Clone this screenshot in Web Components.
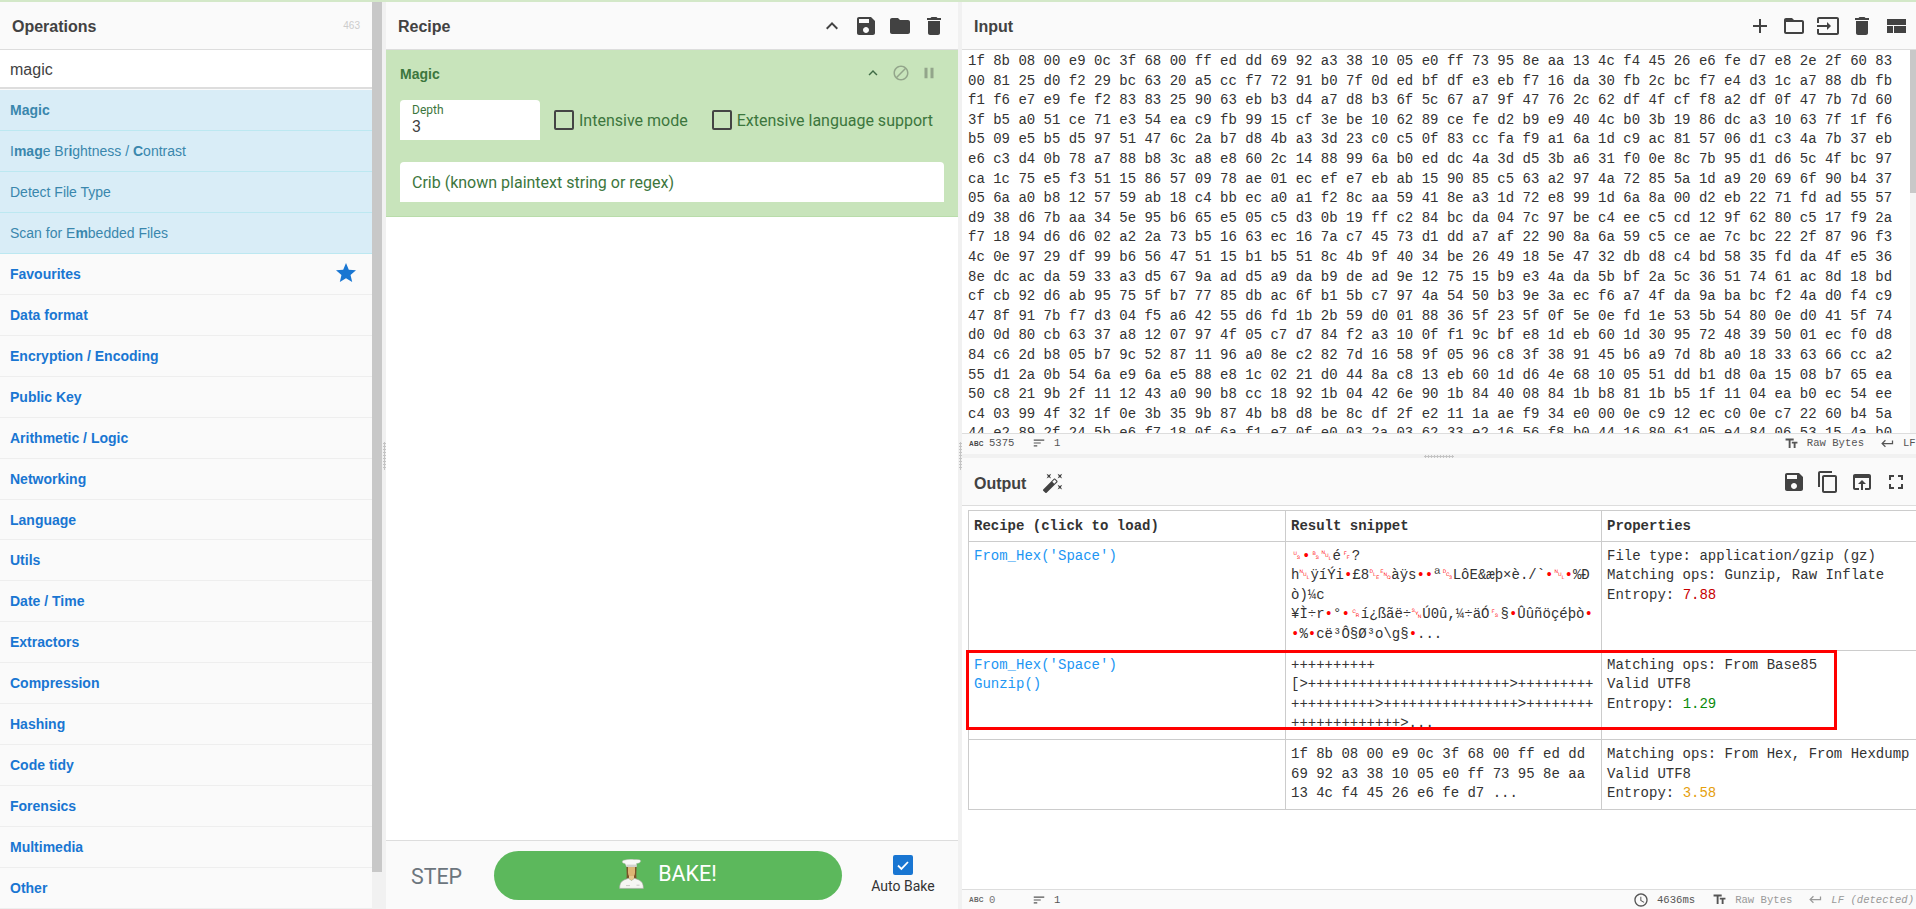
<!DOCTYPE html>
<html lang="en">
<head>
<meta charset="utf-8">
<title>CyberChef</title>
<style>
  html, body { margin: 0; padding: 0; height: 100%; overflow: hidden; background: #f1f1f1; }
  body { font-family: "Liberation Sans", Arial, sans-serif; color: #424242; }
</style>
</head>
<body>
<cc-app></cc-app>

<script>
const ICONS = {
  up: 'M7.41 15.41L12 10.83l4.59 4.58L18 14l-6-6-6 6z',
  save: 'M17 3H5c-1.11 0-2 .9-2 2v14c0 1.1.89 2 2 2h14c1.1 0 2-.9 2-2V7l-4-4zm-5 16c-1.66 0-3-1.34-3-3s1.34-3 3-3 3 1.34 3 3-1.34 3-3 3zm3-10H5V5h10v4z',
  folder: 'M10 4H4c-1.1 0-1.99.9-1.99 2L2 18c0 1.1.9 2 2 2h16c1.1 0 2-.9 2-2V8c0-1.1-.9-2-2-2h-8l-2-2z',
  folderOpen: 'M20 6h-8l-2-2H4c-1.1 0-1.99.9-1.99 2L2 18c0 1.1.9 2 2 2h16c1.1 0 2-.9 2-2V8c0-1.1-.9-2-2-2zm0 12H4V8h16v10z',
  trash: 'M6 19c0 1.1.9 2 2 2h8c1.1 0 2-.9 2-2V7H6v12zM19 4h-3.5l-1-1h-5l-1 1H5v2h14V4z',
  add: 'M19 13h-6v6h-2v-6H5v-2h6V5h2v6h6v2z',
  input: 'M21 3.01H3c-1.1 0-2 .9-2 2V9h2V4.99h18v14.03H3V15H1v4.01c0 1.1.9 1.98 2 1.98h18c1.1 0 2-.88 2-1.98v-14c0-1.11-.9-2-2-2zM11 16l4-4-4-4v3H1v2h10v3z',
  layout: 'M3 19h6v-7H3v7zm7 0h12v-7H10v7zM3 5v6h19V5H3z',
  block: 'M12 2C6.48 2 2 6.48 2 12s4.48 10 10 10 10-4.48 10-10S17.52 2 12 2zM4 12c0-4.42 3.58-8 8-8 1.85 0 3.55.63 4.9 1.69L5.69 16.9C4.63 15.55 4 13.85 4 12zm8 8c-1.85 0-3.55-.63-4.9-1.69L18.31 7.1C19.37 8.45 20 10.15 20 12c0 4.42-3.58 8-8 8z',
  pause: 'M6 19h4V5H6v14zm8-14v14h4V5h-4z',
  copy: 'M16 1H4c-1.1 0-2 .9-2 2v14h2V3h12V1zm3 4H8c-1.1 0-2 .9-2 2v14c0 1.1.9 2 2 2h11c1.1 0 2-.9 2-2V7c0-1.1-.9-2-2-2zm0 16H8V7h11v14z',
  openIn: 'M19 4H5c-1.11 0-2 .9-2 2v12c0 1.1.89 2 2 2h4v-2H5V8h14v10h-4v2h4c1.1 0 2-.9 2-2V6c0-1.1-.89-2-2-2zm-7 6l-4 4h3v6h2v-6h3l-4-4z',
  fullscreen: 'M7 14H5v5h5v-2H7v-3zm-2-4h2V7h3V5H5v5zm12 7h-3v2h5v-5h-2v3zM14 5v2h3v3h2V5h-5z',
  wand: 'M7.5 5.6L10 7 8.6 4.5 10 2 7.5 3.4 5 2l1.4 2.5L5 7zm12 9.8L17 14l1.4 2.5L17 19l2.5-1.4L22 19l-1.4-2.5L22 14zM22 2l-2.5 1.4L17 2l1.4 2.5L17 7l2.5-1.4L22 7l-1.4-2.5zm-7.63 5.29c-.39-.39-1.02-.39-1.41 0L1.29 18.96c-.39.39-.39 1.02 0 1.41l2.34 2.34c.39.39 1.02.39 1.41 0L16.7 11.05c.39-.39.39-1.02 0-1.41l-2.33-2.35zm-1.03 5.49l-2.12-2.12 2.44-2.44 2.12 2.12-2.44 2.44z',
  star: 'M12 17.27L18.18 21l-1.64-7.03L22 9.24l-7.19-.61L12 2 9.19 8.63 2 9.24l5.46 4.73L5.82 21z',
  clock: 'M11.99 2C6.47 2 2 6.48 2 12s4.47 10 9.99 10C17.52 22 22 17.52 22 12S17.52 2 11.99 2zM12 20c-4.42 0-8-3.58-8-8s3.58-8 8-8 8 3.58 8 8-3.58 8-8 8zm.5-13H11v6l5.25 3.15.75-1.23-4.5-2.67z',
  text: 'M2.5 4v3h5v12h3V7h5V4h-13zm19 5h-9v3h3v7h3v-7h3V9z',
  enter: 'M19 7v4H5.83l3.58-3.59L8 6l-6 6 6 6 1.41-1.41L5.83 13H21V7z',
  sort: 'M3 18h6v-2H3v2zM3 6v2h18V6H3zm0 7h12v-2H3v2z'
};

class CcIcon extends HTMLElement {
  connectedCallback() {
    const size = this.getAttribute('size') || 24;
    const shadow = this.attachShadow({ mode: 'open' });
    shadow.innerHTML = `
      <style>
        :host { display: inline-flex; flex: none; width: ${size}px; height: ${size}px; }
        svg { display: block; width: 100%; height: 100%; fill: currentColor; }
      </style>
      <svg viewBox="0 0 24 24"><path d="${ICONS[this.getAttribute('name')]}"/></svg>`;
  }
}

// title on the left, icon buttons on the right
class CcPanelHeader extends HTMLElement {
  constructor() {
    super();
    this.attachShadow({ mode: 'open' }).innerHTML = `
      <style>
        :host {
          display: flex; align-items: center; box-sizing: border-box; height: 48px; flex: none;
          background: #fafafa; border-bottom: 1px solid #ddd; padding: 0 3px 0 12px; color: #424242;
        }
        .title { font: bold 16px "Liberation Sans", Arial, sans-serif; flex: 1; display: flex; align-items: center; padding-top: 2px; }
        .btns { display: flex; }
        ::slotted(cc-icon) { margin: 0 5px; }
      </style>
      <div class="title"><slot name="title"></slot></div>
      <div class="btns"><slot></slot></div>`;
  }
}

class CcOpItem extends HTMLElement {
  constructor() {
    super();
    this.attachShadow({ mode: 'open' }).innerHTML = `
      <style>
        :host {
          display: flex; align-items: center; box-sizing: border-box; height: 41.12px; padding: 0 10px;
          font: 14px "Liberation Sans", Arial, sans-serif;
          background: #fafafa; color: #1976d2; border-bottom: 1px solid #eee; font-weight: bold;
        }
        :host([hit]) { background: #d9edf7; color: #3a87ad; border-bottom-color: #bce8f1; font-weight: normal; }
        .label { flex: 1; }
      </style>
      <div class="label"><slot></slot></div>
      <slot name="end"></slot>`;
  }
}

class CcOperations extends HTMLElement {
  constructor() {
    super();
    const cats = ['Data format', 'Encryption / Encoding', 'Public Key', 'Arithmetic / Logic', 'Networking',
      'Language', 'Utils', 'Date / Time', 'Extractors', 'Compression', 'Hashing', 'Code tidy', 'Forensics',
      'Multimedia', 'Other'];
    this.attachShadow({ mode: 'open' }).innerHTML = `
      <style>
        :host { display: flex; height: 100%; overflow: hidden; }
        .col { width: 372px; display: flex; flex-direction: column; background: #fafafa; }
        .count { font-size: 10px; color: #ccc; margin-right: 9px; font-weight: normal; }
        .search {
          box-sizing: border-box; height: 39px; flex: none; padding: 2px 10px 0; display: flex; align-items: center;
          background: #fff; border-bottom: 2px solid #ddd; font: 16px "Liberation Sans", Arial, sans-serif; color: #424242;
        }
        b { font-weight: bold; }
        cc-op-item:first-of-type { margin-top: 1px; }
        .star { color: #1976d2; margin: -2px 4px 0 0; }
        .bar { width: 10px; background: #f1f1f1; }
        .thumb { width: 10px; height: 870px; background: #c8c8c8; }
      </style>
      <div class="col">
        <cc-panel-header><span slot="title" style="flex:1">Operations</span><span class="count">463</span></cc-panel-header>
        <div class="search">magic</div>
        <cc-op-item hit><b>Magic</b></cc-op-item>
        <cc-op-item hit>I<b>mag</b>e Br<b>i</b>ghtness / <b>C</b>ontrast</cc-op-item>
        <cc-op-item hit>Detect File Type</cc-op-item>
        <cc-op-item hit>Scan for E<b>m</b>bedded Files</cc-op-item>
        <cc-op-item>Favourites<cc-icon class="star" slot="end" name="star" size="24"></cc-icon></cc-op-item>
        ${cats.map(c => `<cc-op-item>${c}</cc-op-item>`).join('')}
      </div>
      <div class="bar"><div class="thumb"></div></div>`;
  }
}

class CcCheck extends HTMLElement {
  constructor() {
    super();
    this.attachShadow({ mode: 'open' }).innerHTML = `
      <style>
        :host { display: inline-flex; align-items: center; gap: 5px; font: 16px Roboto, sans-serif; color: #3c763d; }
        .box { box-sizing: border-box; width: 20px; height: 20px; border: 2px solid #444; border-radius: 2px; }
      </style>
      <span class="box"></span><slot></slot>`;
  }
}

class CcRecipe extends HTMLElement {
  constructor() {
    super();
    this.attachShadow({ mode: 'open' }).innerHTML = `
      <style>
        :host { display: flex; flex-direction: column; height: 100%; background: #fff; overflow: hidden; }
        cc-panel-header { padding-right: 7px; }
        .op {
          box-sizing: border-box; height: 167px; flex: none; background: #c8e4bb; border-bottom: 1px solid #b9dcaa;
          padding: 0 14px; color: #3c763d;
        }
        .op-head { display: flex; align-items: center; height: 50px; }
        .op-title { flex: 1; font: bold 14px "Liberation Sans", Arial, sans-serif; margin-top: -2px; }
        .op-btns { display: flex; gap: 10px; margin-top: -4px; margin-right: 6px; color: #3f6b45; }
        .dim { opacity: .35; color: #333; }
        .row { display: flex; align-items: center; }
        .field {
          box-sizing: border-box; background: #fff; border-radius: 4px 4px 0 0; height: 40px; padding: 3px 12px 0;
          font-family: Roboto, sans-serif;
        }
        .depth { width: 140px; margin-right: 14px; }
        .depth small { display: block; font-size: 12px; line-height: 14px; color: #3c763d; }
        .depth span { display: block; font-size: 16px; line-height: 19px; color: #424242; }
        cc-check + cc-check { margin-left: 24px; }
        .crib { margin-top: 22px; font-size: 16px; line-height: 36px; color: #3c763d; }
        .space { flex: 1; }
        .foot {
          box-sizing: border-box; height: 69px; flex: none; background: #fafafa; border-top: 1px solid #ddd;
          display: flex; align-items: center; padding: 0 16px 0 25px;
        }
        .step { font: 21.4px Roboto, sans-serif; color: #6c757d; width: 83px; margin-top: 2px; }
        .bake {
          width: 348px; height: 49px; border-radius: 25px; background: #5cb85c; color: #fff; margin-top: 1px;
          display: flex; align-items: center; justify-content: center; gap: 14px;
          font: 21.4px Roboto, sans-serif; line-height: 45px; box-sizing: border-box;
        }
        .bake svg { display: block; margin-bottom: 3px; }
        .bake span { margin-top: -4px; }
        .auto { margin-left: 29px; display: flex; flex-direction: column; align-items: center; font: 14px Roboto, sans-serif; color: #333; width: 64px; margin-top: -1px; }
        .tick { display: block; width: 20px; height: 20px; border-radius: 2px; background: #1976d2; margin-bottom: 3px; }
      </style>
      <cc-panel-header>
        <span slot="title">Recipe</span>
        <cc-icon name="up"></cc-icon><cc-icon name="save"></cc-icon><cc-icon name="folder"></cc-icon><cc-icon name="trash"></cc-icon>
      </cc-panel-header>
      <div class="op">
        <div class="op-head">
          <div class="op-title">Magic</div>
          <div class="op-btns">
            <cc-icon name="up" size="18"></cc-icon>
            <cc-icon class="dim" name="block" size="18"></cc-icon>
            <cc-icon class="dim" name="pause" size="18"></cc-icon>
          </div>
        </div>
        <div class="row">
          <div class="field depth"><small>Depth</small><span>3</span></div>
          <cc-check>Intensive mode</cc-check>
          <cc-check>Extensive language support</cc-check>
        </div>
        <div class="field crib">Crib (known plaintext string or regex)</div>
      </div>
      <div class="space"></div>
      <div class="foot">
        <div class="step">STEP</div>
        <div class="bake">
          <svg width="25" height="30" viewBox="0 0 25 30">
            <path d="M7.5 8 C7.5 13 8 16 7.5 19.5 L17.5 19.5 C17 16 17.5 13 17.5 8 Z" fill="#7a5228"/>
            <path d="M9 8 L16 8 L16 13.5 C16 16.5 14.6 18 12.5 18 C10.4 18 9 16.5 9 13.5 Z" fill="#dcb574"/>
            <path d="M0.6 29.4 C0.6 25.5 1.6 22.5 5 21 L9.5 19.3 L12.5 21.5 L15.5 19.3 L20 21 C23.4 22.5 24.4 25.5 24.4 29.4 Z" fill="#f6f6f3" stroke="#a3a39e" stroke-width=".6"/>
            <path d="M10 17 L15 17 L15 19.4 L12.5 21.6 L10 19.4 Z" fill="#e8c990"/>
            <path d="M7 26.6 h4 M17.5 26.2 h3" stroke="#b5b5b0" stroke-width=".7" fill="none"/>
            <path d="M6 4.5 C2.5 4.5 2.5 1 6 1 C9 0 13 0 15 .6 C19 0 22.5 .6 21.5 2.6 C21 4 19 4.4 17.5 4.6 L17.5 7.6 L7.5 7.6 Z" fill="#f8f8f6" stroke="#b8b8b3" stroke-width=".5"/>
            <rect x="7.5" y="5.6" width="10" height="2.4" fill="#d2d2ce"/>
          </svg>
          <span>BAKE!</span>
        </div>
        <div class="auto">
          <svg class="tick" viewBox="0 0 20 20"><path d="M5 10.5l3.4 3.4L15 7" fill="none" stroke="#fff" stroke-width="1.8"/></svg>
          Auto Bake
        </div>
      </div>`;
  }
}

// bottom strip of input and output panes
class CcStatus extends HTMLElement {
  constructor() {
    super();
    this.attachShadow({ mode: 'open' }).innerHTML = `
      <style>
        :host {
          display: flex; align-items: center; box-sizing: border-box; flex: none; overflow: hidden;
          background: #fafafa; font: 10.6px "Liberation Mono", monospace; color: #555; white-space: nowrap;
        }
        .side { display: flex; align-items: center; }
        .grow { flex: 1; }
      </style>
      <div class="side"><slot name="left"></slot></div>
      <div class="grow"></div>
      <div class="side"><slot name="right"></slot></div>`;
  }
}

class CcInput extends HTMLElement {
  constructor() {
    super();
    const hex = `1f 8b 08 00 e9 0c 3f 68 00 ff ed dd 69 92 a3 38 10 05 e0 ff 73 95 8e aa 13 4c f4 45 26 e6 fe d7 e8 2e 2f 60 83
00 81 25 d0 f2 29 bc 63 20 a5 cc f7 72 91 b0 7f 0d ed bf df e3 eb f7 16 da 30 fb 2c bc f7 e4 d3 1c a7 88 db fb
f1 f6 e7 e9 fe f2 83 83 25 90 63 eb b3 d4 a7 d8 b3 6f 5c 67 a7 9f 47 76 2c 62 df 4f cf f8 a2 df 0f 47 7b 7d 60
3f b5 a0 51 ce 71 e3 54 ea c9 fb 99 15 cf 3e be 10 62 89 ce fe d2 b9 e9 40 4c b0 3b 19 86 dc a3 10 63 7f 1f f6
b5 09 e5 b5 d5 97 51 47 6c 2a b7 d8 4b a3 3d 23 c0 c5 0f 83 cc fa f9 a1 6a 1d c9 ac 81 57 06 d1 c3 4a 7b 37 eb
e6 c3 d4 0b 78 a7 88 b8 3c a8 e8 60 2c 14 88 99 6a b0 ed dc 4a 3d d5 3b a6 31 f0 0e 8c 7b 95 d1 d6 5c 4f bc 97
ca 1c 75 e5 f3 51 15 86 57 09 78 ae 01 ec ef e7 eb ab 15 90 85 c5 63 a2 97 4a 72 85 5a 1d a9 20 69 6f 90 b4 37
05 6a a0 b8 12 57 59 ab 18 c4 bb ec a0 a1 f2 8c aa 59 41 8e a3 1d 72 e8 99 1d 6a 8a 00 d2 eb 22 71 fd ad 55 57
d9 38 d6 7b aa 34 5e 95 b6 65 e5 05 c5 d3 0b 19 ff c2 84 bc da 04 7c 97 be c4 ee c5 cd 12 9f 62 80 c5 17 f9 2a
f7 18 94 d6 d6 02 a2 2a 73 b5 16 63 ec 16 7a c7 45 73 d1 dd a7 af 22 90 8a 6a 59 c5 ce ae 7c bc 22 2f 87 96 f3
4c 0e 97 29 df 99 b6 56 47 51 15 b1 b5 51 8c 4b 9f 40 34 be 26 49 18 5e 47 32 db d8 c4 bd 58 35 fd da 4f e5 36
8e dc ac da 59 33 a3 d5 67 9a ad d5 a9 da b9 de ad 9e 12 75 15 b9 e3 4a da 5b bf 2a 5c 36 51 74 61 ac 8d 18 bd
cf cb 92 d6 ab 95 75 5f b7 77 85 db ac 6f b1 5b c7 97 4a 54 50 b3 9e 3a ec f6 a7 4f da 9a ba bc f2 4a d0 f4 c9
47 8f 91 7b f7 d3 04 f5 a6 42 55 d6 fd 1b 2b 59 d0 01 88 36 5f 23 5f 0f 5e 0e fd 1e 53 5b 54 80 0e d0 41 5f 74
d0 0d 80 cb 63 37 a8 12 07 97 4f 05 c7 d7 84 f2 a3 10 0f f1 9c bf e8 1d eb 60 1d 30 95 72 48 39 50 01 ec f0 d8
84 c6 2d b8 05 b7 9c 52 87 11 96 a0 8e c2 82 7d 16 58 9f 05 96 c8 3f 38 91 45 b6 a9 7d 8b a0 18 33 63 66 cc a2
55 d1 2a 0b 54 6a e9 6a e5 88 e8 1c 02 21 d0 44 8a c8 13 eb 60 1d d6 4e 68 10 05 51 dd b1 d8 0a 15 08 b7 65 ea
50 c8 21 9b 2f 11 12 43 a0 90 b8 cc 18 92 1b 04 42 6e 90 1b 84 40 08 84 1b b8 81 1b b5 1f 11 04 ea b0 ec 54 ee
c4 03 99 4f 32 1f 0e 3b 35 9b 87 4b b8 d8 be 8c df 2f e2 11 1a ae f9 34 e0 00 0e c9 12 ec c0 0e c7 22 60 b4 5a
44 e2 89 2f 24 5b e6 f7 18 0f 6a f1 e7 0f e0 03 2a 03 62 33 e2 16 56 f8 b0 44 16 80 61 05 e4 84 06 53 15 4a b0`;
    this.attachShadow({ mode: 'open' }).innerHTML = `
      <style>
        :host { display: flex; flex-direction: column; height: 100%; overflow: hidden; background: #fff; }
        .body { flex: 1; min-height: 0; display: flex; overflow: hidden; }
        pre {
          flex: 1; margin: 0; padding: 2px 0 0 6px; overflow: hidden;
          font: 14px/19.6px "Liberation Mono", monospace; color: #333;
        }
        .bar { width: 6px; background: #f5f5f5; }
        .thumb { height: 143px; background: #c8c8c8; }
        cc-status { height: 21px; border-top: 1px solid #ddd; padding-bottom: 2px; }
        .i { margin-right: 8px; }
        .abc { font: bold 6.5px "Liberation Sans", Arial, sans-serif; width: 12px; margin: 0 8px 0 7px; letter-spacing: .2px; color: #444; }
        .n { margin-right: 15px; min-width: 28px; }
        .r { margin-right: 16px; }
      </style>
      <cc-panel-header>
        <span slot="title">Input</span>
        <cc-icon name="add"></cc-icon><cc-icon name="folderOpen"></cc-icon><cc-icon name="input"></cc-icon><cc-icon name="trash"></cc-icon><cc-icon name="layout"></cc-icon>
      </cc-panel-header>
      <div class="body"><pre>${hex}</pre><div class="bar"><div class="thumb"></div></div></div>
      <cc-status>
        <span slot="left" class="abc">ABC</span><span slot="left" class="n">5375</span>
        <cc-icon slot="left" class="i" name="sort" size="14"></cc-icon><span slot="left">1</span>
        <cc-icon slot="right" class="i" name="text" size="15"></cc-icon><span slot="right" class="r">Raw Bytes</span>
        <cc-icon slot="right" class="i" name="enter" size="15"></cc-icon><span slot="right" style="width:13px;overflow:hidden">LF</span>
      </cc-status>`;
  }
}

class CcOutput extends HTMLElement {
  constructor() {
    super();
    const c = ch => `<i>${ch}</i>`;
    const bul = c('•');
    const plus = n => '+'.repeat(n);
    this.attachShadow({ mode: 'open' }).innerHTML = `
      <style>
        :host { display: flex; flex-direction: column; height: 100%; overflow: hidden; background: #fff; }
        .body { flex: 1; min-height: 0; overflow: hidden; padding: 4px 0 0 6px; position: relative; }
        table {
          border-collapse: collapse; table-layout: fixed; width: 1100px;
          font: 14px/19.6px "Liberation Mono", "DejaVu Sans Mono", monospace; color: #333;
        }
        th, td { border: 1px solid #ccc; padding: 5px; text-align: left; vertical-align: top; white-space: nowrap; overflow: hidden; }
        th { font-weight: bold; padding: 6px 5px 4px; }
        .rec { color: #2196f3; }
        i { font-style: normal; color: #f00; }
        .hl { position: absolute; left: 4px; top: 144px; width: 865px; height: 74px; border: 3px solid #f00; }
        .hi { color: #c80000; } .lo { color: #0a8a0a; } .mid { color: #e5a00d; }
        .otitle { display: inline-flex; align-items: center; padding-top: 2px; }
        .wand { margin: -1px 0 0 16px; }
        cc-status { height: 20px; border-top: 1px solid #ddd; }
        .i { margin-right: 8px; }
        .abc { font: bold 6.5px "Liberation Sans", Arial, sans-serif; width: 12px; margin: 0 8px 0 7px; letter-spacing: .2px; color: #666; }
        .n { margin-right: 15px; min-width: 28px; color: #777; }
        .r { margin-right: 16px; color: #999; }
        .lf { color: #999; font-style: italic; margin-right: 2px; }
      </style>
      <cc-panel-header>
        <span slot="title" class="otitle">Output<cc-icon class="wand" name="wand" size="22"></cc-icon></span>
        <cc-icon name="save"></cc-icon><cc-icon name="copy"></cc-icon><cc-icon name="openIn"></cc-icon><cc-icon name="fullscreen"></cc-icon>
      </cc-panel-header>
      <div class="body">
        <table>
          <colgroup><col style="width:317px"><col style="width:316px"><col></colgroup>
          <tr><th>Recipe (click to load)</th><th>Result snippet</th><th>Properties</th></tr>
          <tr>
            <td class="rec">From_Hex('Space')</td>
            <td>${c('␟')}${bul}${c('␈')}${c('␀')}é${c('␌')}?<br>h${c('␀')}ÿíÝi${bul}£8${c('␐')}${c('␅')}àÿs${bul}${bul}ª${c('␓')}LôE&amp;æþ×è./\`${bul}${c('␀')}${bul}%Ð<br>ò)¼c<br>¥Ì÷r${bul}°${bul}${c('␍')}í¿ßãë÷${c('␖')}Ú0û,¼÷äÓ${c('␜')}§${bul}Ûûñöçéþò${bul}<br>${bul}%${bul}cë³Ô§Ø³o\\g§${bul}...</td>
            <td>File type: application/gzip (gz)<br>Matching ops: Gunzip, Raw Inflate<br>Entropy: <span class="hi">7.88</span></td>
          </tr>
          <tr>
            <td class="rec">From_Hex('Space')<br>Gunzip()</td>
            <td>${plus(10)}<br>[&gt;${plus(24)}&gt;${plus(9)}<br>${plus(10)}&gt;${plus(16)}&gt;${plus(8)}<br>${plus(13)}&gt;...</td>
            <td>Matching ops: From Base85<br>Valid UTF8<br>Entropy: <span class="lo">1.29</span></td>
          </tr>
          <tr>
            <td></td>
            <td>1f 8b 08 00 e9 0c 3f 68 00 ff ed dd<br>69 92 a3 38 10 05 e0 ff 73 95 8e aa<br>13 4c f4 45 26 e6 fe d7 ...</td>
            <td>Matching ops: From Hex, From Hexdump<br>Valid UTF8<br>Entropy: <span class="mid">3.58</span></td>
          </tr>
        </table>
        <div class="hl"></div>
      </div>
      <cc-status>
        <span slot="left" class="abc">ABC</span><span slot="left" class="n">0</span>
        <cc-icon slot="left" class="i" name="sort" size="14"></cc-icon><span slot="left">1</span>
        <cc-icon slot="right" class="i" name="clock" size="16"></cc-icon><span slot="right" style="margin-right:17px">4636ms</span>
        <cc-icon slot="right" class="i" name="text" size="15"></cc-icon><span slot="right" class="r">Raw Bytes</span>
        <cc-icon slot="right" class="i" name="enter" size="15" style="color:#999"></cc-icon><span slot="right" class="lf">LF (detected)</span>
      </cc-status>`;
  }
}

// draggable split handle, only the dots are drawn
class CcGutter extends HTMLElement {
  constructor() {
    super();
    this.attachShadow({ mode: 'open' }).innerHTML = `
      <style>
        :host { display: flex; align-items: center; justify-content: center; background: #f1f1f1; overflow: hidden; }
        div { background-image: radial-gradient(circle, #c4c4c4 1px, transparent 1.1px); background-size: 3px 3px; }
        :host([dir-x]) div { width: 3px; height: 28px; }
        :host([dir-y]) div { width: 30px; height: 3px; }
      </style>
      <div></div>`;
  }
}

class CcApp extends HTMLElement {
  constructor() {
    super();
    this.attachShadow({ mode: 'open' }).innerHTML = `
      <style>
        :host { display: flex; flex-direction: column; width: 1916px; height: 909px; overflow: hidden; }
        .banner { height: 2px; flex: none; background: #d3e8c8; }
        .main { flex: 1; min-height: 0; display: grid; grid-template-columns: 382px 4px 572px 4px 954px; }
        .right { display: grid; grid-template-rows: 452px 4px 451px; min-height: 0; overflow: hidden; }
        .right > * { min-height: 0; }
      </style>
      <div class="banner"></div>
      <div class="main">
        <cc-operations></cc-operations>
        <cc-gutter dir-x></cc-gutter>
        <cc-recipe></cc-recipe>
        <cc-gutter dir-x></cc-gutter>
        <div class="right">
          <cc-input></cc-input>
          <cc-gutter dir-y></cc-gutter>
          <cc-output></cc-output>
        </div>
      </div>`;
  }
}

customElements.define('cc-icon', CcIcon);
customElements.define('cc-panel-header', CcPanelHeader);
customElements.define('cc-op-item', CcOpItem);
customElements.define('cc-operations', CcOperations);
customElements.define('cc-check', CcCheck);
customElements.define('cc-recipe', CcRecipe);
customElements.define('cc-status', CcStatus);
customElements.define('cc-input', CcInput);
customElements.define('cc-output', CcOutput);
customElements.define('cc-gutter', CcGutter);
customElements.define('cc-app', CcApp);
</script>
</body>
</html>
